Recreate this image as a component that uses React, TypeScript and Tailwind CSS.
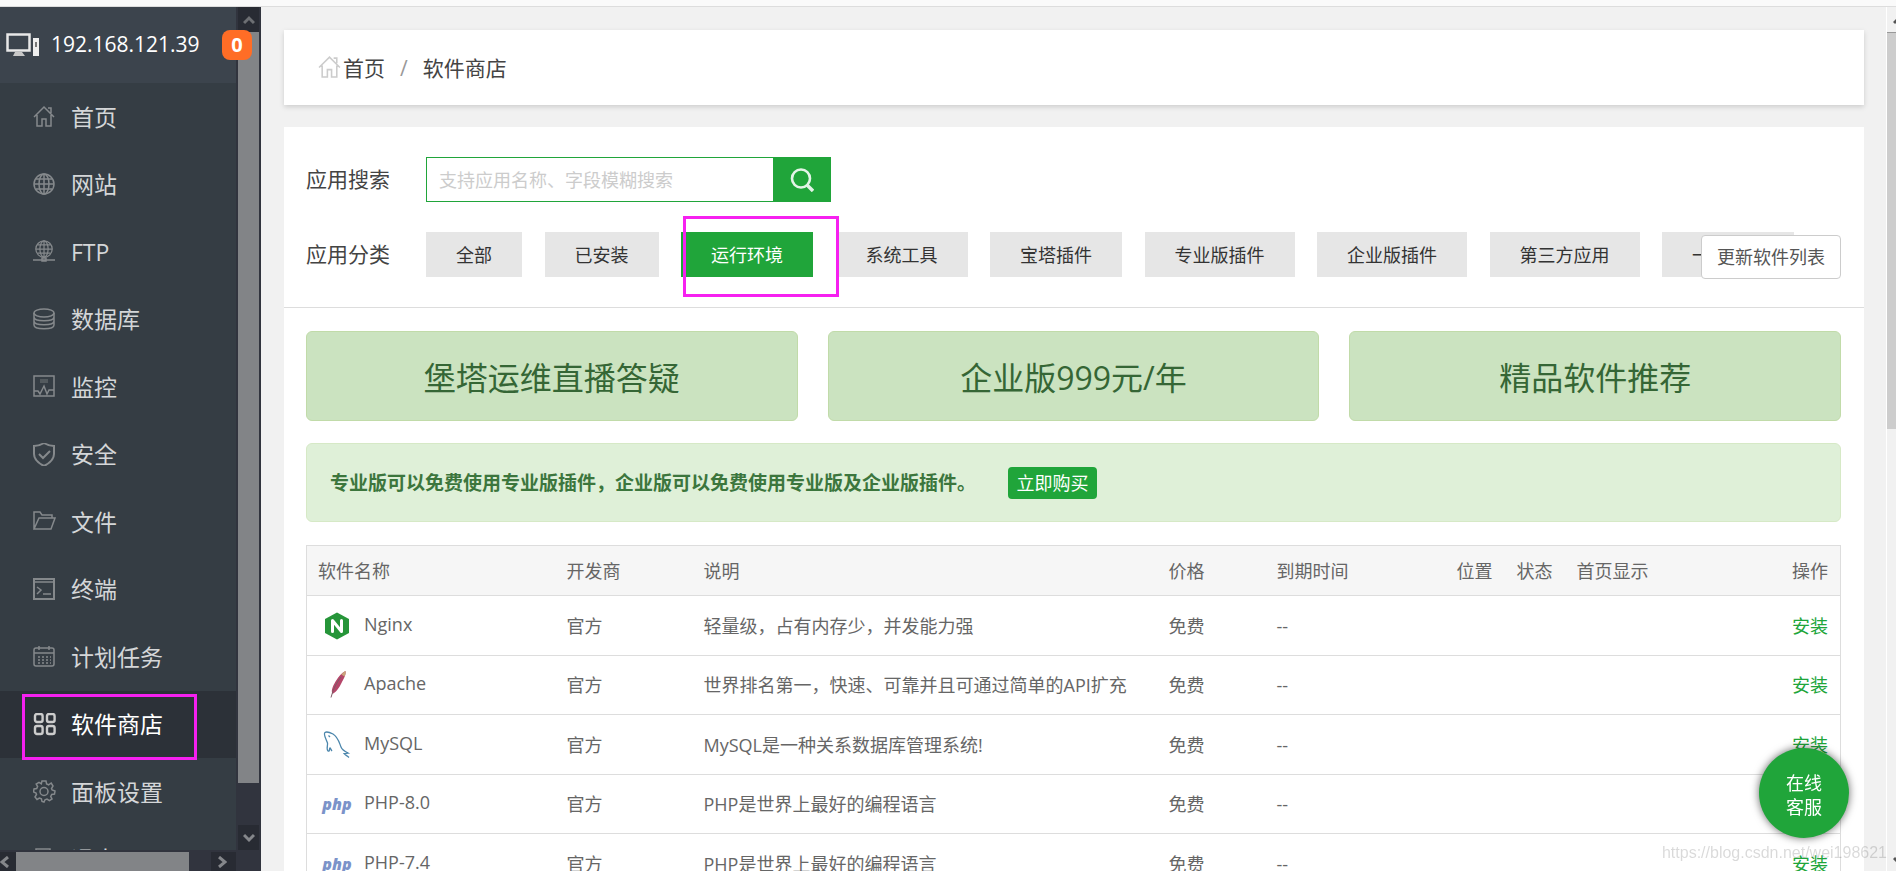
import type { ReactNode } from "react"

const navItems = [
  { title: "首页", icon: "home" },
  { title: "网站", icon: "globe" },
  { title: "FTP", icon: "ftp" },
  { title: "数据库", icon: "database" },
  { title: "监控", icon: "monitor" },
  { title: "安全", icon: "shield" },
  { title: "文件", icon: "folder" },
  { title: "终端", icon: "terminal" },
  { title: "计划任务", icon: "calendar" },
  { title: "软件商店", icon: "store" },
  { title: "面板设置", icon: "gear" },
  { title: "退出", icon: "exit" },
]

const categories = [
  "全部",
  "已安装",
  "运行环境",
  "系统工具",
  "宝塔插件",
  "专业版插件",
  "企业版插件",
  "第三方应用",
  "一键部署",
]

const banners = ["堡塔运维直播答疑", "企业版999元/年", "精品软件推荐"]

const software = [
  { name: "Nginx", logo: "nginx", desc: "轻量级，占有内存少，并发能力强" },
  { name: "Apache", logo: "apache", desc: "世界排名第一，快速、可靠并且可通过简单的API扩充" },
  { name: "MySQL", logo: "mysql", desc: "MySQL是一种关系数据库管理系统!" },
  { name: "PHP-8.0", logo: "php", desc: "PHP是世界上最好的编程语言" },
  { name: "PHP-7.4", logo: "php", desc: "PHP是世界上最好的编程语言" },
]

const globeLines = (
  <>
    <path d="M11 1v20M1 11h20M3 6h16M3 16h16" />
    <ellipse cx="11" cy="11" rx="5" ry="10" />
    <circle cx="11" cy="11" r="10" />
  </>
)

const iconPaths: Record<string, ReactNode> = {
  home: <path d="M1 12 11 2l10 10M4 10v11h5v-7h4v7h5V10M15 3h3v5" />,
  globe: globeLines,
  ftp: (
    <>
      <g transform="translate(2 0) scale(.82)">{globeLines}</g>
      <path d="M0 20h22M9 18h4v3H9z" />
    </>
  ),
  database: (
    <>
      <ellipse cx="11" cy="5" rx="10" ry="4" />
      <path d="M1 5v12c0 5 20 5 20 0V5M1 9c0 5 20 5 20 0M1 13c0 5 20 5 20 0" />
    </>
  ),
  monitor: (
    <>
      <path d="M1 1h20v20H1zM1 16h4l2 3 4-8 3 8 2-4h5" />
      <path d="M7 5h8M7 7h8" opacity=".5" />
    </>
  ),
  shield: (
    <path d="M11 0c3 2 6 3 10 3v8c0 5-4 9-10 12C5 20 1 16 1 11V3c4 0 7-1 10-3zM6 11l4 4 7-7" strokeWidth="2" />
  ),
  folder: <path d="M1 19V2h6l2 3h10v3M1 19 6 8h16l-4 11H1z" />,
  terminal: (
    <>
      <path d="M1 1h20v20H1z" strokeWidth="2" />
      <path d="M1 4h20M4 9l4 3-4 4M10 16h8" />
    </>
  ),
  calendar: (
    <>
      <rect x="1" y="3" width="20" height="18" rx="2" />
      <path d="M1 8h20M6 1v4M16 1v4" />
      <path d="M5 12h13M5 15h13M5 18h13" strokeDasharray="2 2" />
    </>
  ),
  store: (
    <g strokeWidth="2.4">
      <rect x="2" y="1" width="7.6" height="8" rx="2" />
      <rect x="14" y="1" width="7.6" height="8" rx="2" />
      <rect x="2" y="13" width="7.6" height="8" rx="2" />
      <rect x="14" y="13" width="7.6" height="8" rx="2" />
    </g>
  ),
  gear: (
    <>
      <path d="M9 1h4l.6 3 2 .8L18.200 3 20 6l-1.500 2.500.6 1.500L22 11l-.5 3-2.800.4-1 2 1.300 2.600-2.600 1.700-2.400-1.600-2 .7L11 22l-2-.5-.6-2.700-2-.8L4 19.500 2 17l1.500-2.500L3 13l-2.500-1 .5-3 2.700-.4.9-2L3.200 4 6 2.300l2.300 1.500z" />
      <circle cx="11" cy="11.500" r="4" />
    </>
  ),
  exit: <path d="M3 1h14v20H3z" />,
}

function NavIcon({ name, className }: { name: string; className: string }) {
  return (
    <svg viewBox="0 0 23 23" fill="none" stroke="currentColor" strokeWidth="1.5" className={className} aria-hidden="true">
      {iconPaths[name]}
    </svg>
  )
}

function Logo({ name }: { name: string }) {
  if (name === "nginx") {
    return (
      <svg viewBox="0 0 30 30" className="size-[30px]" aria-hidden="true">
        <path d="M15 1.500 27 8v14l-12 6.500L3 22V8z" fill="#269539" />
        <path d="M10.500 20.500v-11l9 11v-11" fill="none" stroke="#fff" strokeWidth="3" strokeLinejoin="round" strokeLinecap="round" />
      </svg>
    )
  }
  if (name === "apache") {
    return (
      <svg viewBox="0 0 30 30" className="size-[30px]" aria-hidden="true">
        <path d="M23.500 1c.8 4-2 8-4 12s-5 9-9 11c-2-4 1-9 4-14 2-3.500 5-7 9-9z" fill="#b5466a" />
        <path d="M23.500 1c.5 2-.3 4-1 5.500l-3.200-2C20.500 3 22 1.600 23.500 1z" fill="#c9a57a" />
        <path d="M19 7C15 12 11 19 9 27.500" fill="none" stroke="#7d5b66" />
      </svg>
    )
  }
  if (name === "mysql") {
    return (
      <svg viewBox="0 0 30 30" className="size-[30px]" fill="none" stroke="#4b86ac" strokeWidth="1.300" aria-hidden="true">
        <path d="M10 21c-1-1-1.500-3-2-3-1 1 0 4-2 3-2-2 0-6-.5-8C4 9 1 4 3 2.500 5 1 9 3 11 4c5 3 6 8 8 13 1 3 3 4 7 6l-4 .5c1 1.500 3 2 5 4" />
        <path d="M6.500 5.500 8 7" />
      </svg>
    )
  }
  return (
    <span className="w-[30px] text-center font-['Open_Sans',sans-serif] text-base leading-[30px] font-extrabold text-[#7b93c9] italic">
      php
    </span>
  )
}

function Sidebar() {
  return (
    <aside className="flex w-[261px] shrink-0 bg-[#31343e]">
      <div className="flex w-[236px] flex-col">
        <div className="relative flex h-[76px] shrink-0 items-center bg-[#3c444d] pl-[6px] text-[21px] text-white">
          <svg viewBox="0 0 34 26" className="mr-[11px] h-[26px] w-[34px]" aria-hidden="true">
            <path d="M1.500 2.500h22v16h-22z" fill="none" stroke="#e8e8e8" strokeWidth="2.500" />
            <path d="M9 20h7l3 4H7z" fill="#c8c8c8" />
            <path d="M27 6h6v18h-6z" fill="#eee" />
            <path d="M29 10h2v5h-2z" fill="#777" />
          </svg>
          <span>192.168.121.39</span>
          <span className="absolute top-[23px] left-[222px] z-10 flex size-[30px] items-center justify-center rounded-lg bg-[#ff6d26] text-xl font-bold">
            0
          </span>
        </div>
        <nav className="min-h-0 flex-1 overflow-hidden bg-[#353d44]">
          <ul className="flex h-[810px] flex-col">
            {navItems.map((item) => (
              <li key={item.title} className="relative flex-1">
                <a
                  href="#"
                  className={
                    item.icon === "store"
                      ? "flex h-full items-center bg-[#2c3138] pl-[33px] text-[23px] text-white"
                      : "flex h-full items-center pl-[33px] text-[23px] text-[#d4d6d8]"
                  }
                >
                  <NavIcon
                    name={item.icon}
                    className={
                      item.icon === "store" ? "mr-[15px] size-[23px] text-[#ccc]" : "mr-[15px] size-[23px] text-[#85898c]"
                    }
                  />
                  {item.title}
                </a>
                {item.icon === "store" && (
                  <span className="pointer-events-none absolute top-[3px] left-[22px] z-10 h-[66px] w-[175px] border-[3px] border-[#f620f0]" />
                )}
              </li>
            ))}
          </ul>
        </nav>
        {/* Horizontal scrollbar */}
        <div className="flex h-[21px] shrink-0 justify-between pt-[2px]">
          <div className="flex">
            <div className="flex w-4 items-center bg-[#282b33]">
              <svg viewBox="0 0 10 12" className="h-3 w-[10px]" fill="none" stroke="#85878b" strokeWidth="3" aria-hidden="true">
                <path d="M8 1 2 6l6 5" />
              </svg>
            </div>
            <div className="w-[173px] bg-[#828487]" />
          </div>
          <div className="flex w-[25px] items-center justify-center bg-[#282b33] pr-1">
            <svg viewBox="0 0 10 12" className="h-3 w-[10px]" fill="none" stroke="#85878b" strokeWidth="3" aria-hidden="true">
              <path d="m2 1 6 5-6 5" />
            </svg>
          </div>
        </div>
      </div>
      {/* Vertical scrollbar */}
      <div className="mr-[2px] ml-[2px] flex w-[21px] flex-col pb-[21px]">
        <div className="flex h-[25px] items-center justify-center bg-[#282b33]">
          <svg viewBox="0 0 12 10" className="h-[10px] w-3" fill="none" stroke="#6d6f73" strokeWidth="3" aria-hidden="true">
            <path d="m1 8 5-5 5 5" />
          </svg>
        </div>
        <div className="mb-[42px] flex-1 bg-[#828487]" />
        <div className="flex h-[25px] items-center justify-center bg-[#282b33]">
          <svg viewBox="0 0 12 10" className="h-[10px] w-3" fill="none" stroke="#85878b" strokeWidth="3" aria-hidden="true">
            <path d="m1 2 5 5 5-5" />
          </svg>
        </div>
      </div>
    </aside>
  )
}

function Filters() {
  return (
    <div className="relative border-b border-[#ddd] px-[22px] pt-[30px] pb-[30px]">
      <div className="flex items-center">
        <label htmlFor="search" className="w-[120px] text-[21px] text-[#444]">
          应用搜索
        </label>
        <input
          id="search"
          type="text"
          placeholder="支持应用名称、字段模糊搜索"
          className="h-[45px] w-[347px] border border-r-0 border-[#20a53a] pl-3 text-lg outline-none placeholder:text-[#ccc]"
        />
        <button type="button" aria-label="搜索" className="flex h-[45px] w-[58px] items-center justify-center bg-[#20a53a]">
          <svg viewBox="0 0 24 24" className="size-6" fill="none" stroke="#e3f4e7" aria-hidden="true">
            <circle cx="11" cy="10.500" r="9" strokeWidth="2.600" />
            <path d="m17 17 6 6" strokeWidth="3.400" />
          </svg>
        </button>
      </div>
      <div className="mt-[30px] flex items-center pr-12">
        <span className="w-[120px] shrink-0 text-[21px] text-[#444]">应用分类</span>
        <div className="flex flex-1 justify-between">
          {categories.map((name) => (
            <div key={name} className="relative">
              <button
                type="button"
                className={
                  name === "运行环境"
                    ? "h-[45px] bg-[#20a53a] px-[30px] text-lg whitespace-nowrap text-white"
                    : "h-[45px] bg-[#e6e6e6] px-[30px] text-lg whitespace-nowrap text-[#333]"
                }
              >
                {name}
              </button>
              {name === "运行环境" && (
                <span className="pointer-events-none absolute -top-4 left-[2px] z-10 h-[81px] w-[156px] border-[3px] border-[#f620f0]" />
              )}
            </div>
          ))}
        </div>
      </div>
      <button
        type="button"
        className="absolute right-[23px] bottom-7 h-11 w-[140px] rounded border border-[#ccc] bg-white text-lg text-[#555]"
      >
        更新软件列表
      </button>
    </div>
  )
}

function SoftwareTable() {
  return (
    <table className="mt-[23px] w-full table-fixed border-collapse border border-[#ddd] text-left text-lg text-[#666]">
      <colgroup>
        <col className="w-[249px]" />
        <col className="w-[137px]" />
        <col className="w-[465px]" />
        <col className="w-[108px]" />
        <col className="w-[180px]" />
        <col className="w-[60px]" />
        <col className="w-[60px]" />
        <col />
        <col className="w-[120px]" />
      </colgroup>
      <thead>
        <tr className="h-[50px] bg-[#f6f6f6] *:pl-[11px] *:font-normal *:whitespace-nowrap">
          <th>软件名称</th>
          <th>开发商</th>
          <th>说明</th>
          <th>价格</th>
          <th>到期时间</th>
          <th>位置</th>
          <th>状态</th>
          <th>首页显示</th>
          <th className="pr-3 text-right">操作</th>
        </tr>
      </thead>
      <tbody>
        {software.map((item) => (
          <tr key={item.name} className="border-t border-[#ddd] *:pl-[11px] *:whitespace-nowrap odd:h-[60px] even:h-[59px]">
            <td>
              <div className="flex items-center pl-1">
                <Logo name={item.logo} />
                <span className="ml-3 pb-1">{item.name}</span>
              </div>
            </td>
            <td>官方</td>
            <td>{item.desc}</td>
            <td>免费</td>
            <td>--</td>
            <td />
            <td />
            <td />
            <td className="pr-3 text-right">
              <a href="#" className="text-[#20a53a]">
                安装
              </a>
            </td>
          </tr>
        ))}
      </tbody>
    </table>
  )
}

export default function App() {
  return (
    <div className="flex h-screen flex-col overflow-hidden bg-[#f1f1f1] font-['Open_Sans','Noto_Sans_CJK_SC',sans-serif]">
      <div className="h-[7px] shrink-0 border-b border-[#ddd] bg-[#fafafa]" />
      <div className="flex min-h-0 flex-1">
        <Sidebar />
        <main className="min-w-0 flex-1 overflow-hidden pt-[23px] pr-[22px] pl-[23px]">
          <nav className="flex h-[75px] items-center bg-white pt-[2px] pl-[34px] text-[21px] text-[#444] shadow-[0_2px_5px_rgba(0,0,0,0.15)]">
            <NavIcon name="home" className="mr-px mb-1 size-6 text-[#ccc]" />
            <a href="#">首页</a>
            <span className="mx-[15px] text-[#999]">/</span>
            <a href="#">软件商店</a>
          </nav>
          <section className="mt-[22px] bg-white">
            <Filters />
            <div className="pt-[23px] pr-[23px] pl-[22px]">
              <div className="grid grid-cols-3 gap-[30px]">
                {banners.map((title) => (
                  <button
                    key={title}
                    type="button"
                    className="h-[90px] rounded-md border border-[#c1dba9] bg-[#cbe3c0] pt-[3px] text-[32px] text-[#356635]"
                  >
                    {title}
                  </button>
                ))}
              </div>
              <div className="mt-[22px] flex h-[79px] items-center rounded-md border border-[#d6e9c6] bg-[#dff0d8] pl-[23px] text-[#3c763d]">
                <strong className="pt-[2px] text-[19px]">
                  专业版可以免费使用专业版插件，企业版可以免费使用专业版及企业版插件。
                </strong>
                <button type="button" className="ml-8 h-8 w-[89px] rounded bg-[#20a53a] text-lg leading-8 text-white">
                  立即购买
                </button>
              </div>
              <SoftwareTable />
            </div>
          </section>
        </main>
        {/* Page scrollbar */}
        <div className="flex w-[10px] shrink-0 flex-col overflow-hidden border-l border-white bg-[#f1f1f1]">
          <div className="flex h-[26px] items-center border-b border-[#999] pl-[6px]">
            <svg viewBox="0 0 12 10" className="h-[10px] w-3 shrink-0" fill="none" stroke="#555" strokeWidth="3" aria-hidden="true">
              <path d="m1 8 5-5 5 5" />
            </svg>
          </div>
          <div className="h-[396px] bg-[#cdcdcd]" />
          <div className="mt-auto flex h-[21px] items-center pl-[6px]">
            <svg viewBox="0 0 12 10" className="h-[10px] w-3 shrink-0" fill="none" stroke="#555" strokeWidth="3" aria-hidden="true">
              <path d="m1 2 5 5 5-5" />
            </svg>
          </div>
        </div>
      </div>
      <button
        type="button"
        className="fixed right-[47px] bottom-[33px] size-[90px] rounded-full bg-[#20a53a] pt-[3px] text-lg leading-6 text-white shadow-[0_0_8px_rgba(0,0,0,0.6)]"
      >
        在线
        <br />
        客服
      </button>
      <span className="fixed right-[9px] bottom-[6px] font-['Liberation_Sans',sans-serif] text-base text-black/15">
        https://blog.csdn.net/wei198621
      </span>
    </div>
  )
}
